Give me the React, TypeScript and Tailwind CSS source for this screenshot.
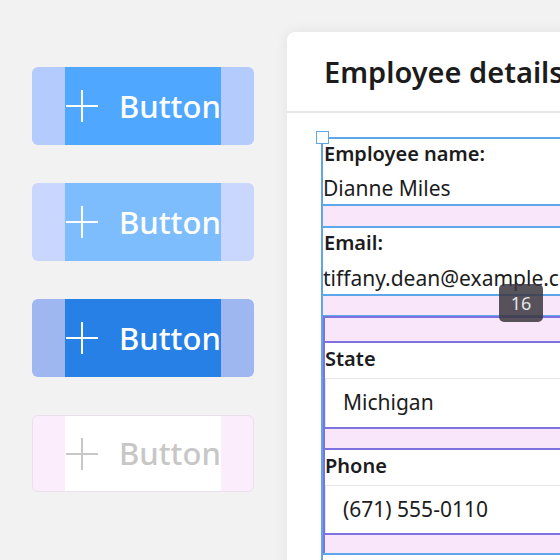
import React from "react";

const Plus = ({ color }: { color: string }) => (
  <svg width="34" height="34" viewBox="0 0 34 34" className="shrink-0">
    <line x1="17" y1="1" x2="17" y2="33" stroke={color} strokeWidth="2" />
    <line x1="1" y1="17" x2="33" y2="17" stroke={color} strokeWidth="2" />
  </svg>
);

function Btn({ outer, inner, fg }: { outer: string; inner: string; fg: string }) {
  return (
    <div className={`w-[222px] rounded-[6px] flex ${outer}`}>
      <div className={`w-[156px] h-full flex items-center gap-[20px] ${inner}`}>
        <Plus color={fg} />
        <span className="text-[31px] font-medium leading-none" style={{ color: fg }}>
          Button
        </span>
      </div>
    </div>
  );
}

export default function App() {
  return (
    <div
      className="relative w-[560px] h-[560px] overflow-hidden bg-[#f2f2f2] flex items-start"
      style={{ fontFamily: '"Noto Sans", "Open Sans", sans-serif' }}
    >
      <div className="flex flex-col gap-[38px] pl-[32px] pt-[67px] shrink-0">
        <Btn outer="h-[78px] px-[33px] bg-[#b4ccfd]" inner="bg-[#4fa7ff]" fg="#ffffff" />
        <Btn outer="h-[78px] px-[33px] bg-[#c9d6fd]" inner="bg-[#7ebdfd]" fg="#ffffff" />
        <Btn outer="h-[78px] px-[33px] bg-[#9eb7f1]" inner="bg-[#2680e6]" fg="#ffffff" />
        <Btn outer="h-[77px] px-[32px] bg-[#fcedfc] border border-[#ecdfec]" inner="bg-white" fg="#c7c7c7" />
      </div>

      <div className="ml-[33px] mt-[32px] w-[330px] h-[600px] shrink-0 bg-white rounded-[8px] shadow-[0_0_14px_rgba(0,0,0,0.07)] text-[#1c1c1c]">
        <div className="h-[81px] border-b-2 border-[#e8e8e8] flex items-center pl-[37px]">
          <span className="text-[29px] font-semibold whitespace-nowrap">Employee details</span>
        </div>
        <div className="ml-[34px] mt-[24px] border-l-2 border-[#5ea6ea]">
          {/* group 1 */}
          <div className="border-t-2 border-[#5ea6ea]">
            <div className="h-[30px] flex items-center text-[20px] font-semibold leading-none pl-[1px] whitespace-nowrap">Employee name:</div>
            <div className="h-[35px] pt-[4px] flex items-center text-[21px] whitespace-nowrap">Dianne Miles</div>
          </div>
          <div className="border-t-2 border-[#5ea6ea] h-[22px] bg-[#f9e6fb]" />
          <div className="border-t-2 border-[#5ea6ea]">
            <div className="h-[30px] flex items-center text-[20px] font-semibold leading-none pl-[1px]">Email:</div>
            <div className="h-[36px] pt-[5px] flex items-center text-[21px] whitespace-nowrap">tiffany.dean@example.com</div>
          </div>
          <div className="border-t-2 border-[#5ea6ea] h-[22px] bg-[#f9e6fb] border-b-[1.5px]" />
          {/* group 2 */}
          <div className="border-t-2 border-l-2 border-[#7d72e0]">
            <div className="h-[23px] bg-[#f9e6fb]" />
            <div className="border-t-2 border-[#7d72e0]">
              <div className="h-[35px] pb-[3px] flex items-center text-[20px] font-semibold leading-none">State</div>
              <div className="h-[49px] border-t border-l border-[#e4e4e4] flex items-center pl-[17px] text-[21px]">
                Michigan
              </div>
            </div>
            <div className="border-t-2 border-[#7d72e0] h-[21px] bg-[#f9e6fb]" />
            <div className="border-t-2 border-[#7d72e0]">
              <div className="h-[35px] pb-[4px] flex items-center text-[20px] font-semibold leading-none">Phone</div>
              <div className="h-[48px] border-t border-l border-[#e4e4e4] flex items-center pl-[17px] text-[21px]">
                (671) 555-0110
              </div>
            </div>
            <div className="border-t-2 border-[#7d72e0] h-[20px] bg-[#f9e6fb]" />
          </div>
          <div className="border-t-2 border-[#5ea6ea] h-[40px]" />
        </div>
      </div>

      {/* selection handle */}
      <div className="absolute left-[316px] top-[131px] w-[13px] h-[13px] border-[1.5px] border-[#5ea6ea] bg-white" />

      {/* spacing tooltip */}
      <div className="absolute left-[499px] top-[284px] w-[44px] h-[38px] rounded-[5px] bg-[#3b3640]/85 flex items-center justify-center text-[18px] text-[#e4e4e4]">
        16
      </div>
    </div>
  );
}
